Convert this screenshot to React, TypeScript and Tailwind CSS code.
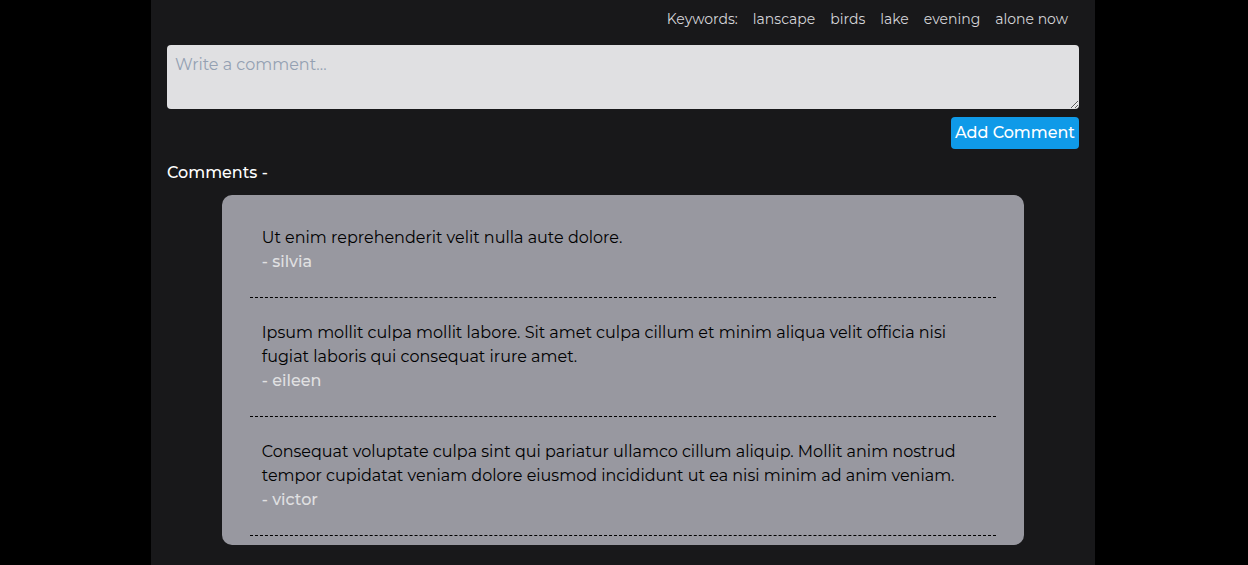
import { useState, type FormEvent } from "react";

type Comment = { text: string; author: string };

const keywords = ["lanscape", "birds", "lake", "evening", "alone now"];

const initialComments: Comment[] = [
  { text: "Ut enim reprehenderit velit nulla aute dolore.", author: "silvia" },
  {
    text: "Ipsum mollit culpa mollit labore. Sit amet culpa cillum et minim aliqua velit officia nisi fugiat laboris qui consequat irure amet.",
    author: "eileen",
  },
  {
    text: "Consequat voluptate culpa sint qui pariatur ullamco cillum aliquip. Mollit anim nostrud tempor cupidatat veniam dolore eiusmod incididunt ut ea nisi minim ad anim veniam.",
    author: "victor",
  },
];

export default function App() {
  const [comments, setComments] = useState(initialComments);
  const [draft, setDraft] = useState("");

  function addComment(event: FormEvent) {
    event.preventDefault();
    const text = draft.trim();
    if (!text) return;
    setComments([...comments, { text, author: "you" }]);
    setDraft("");
  }

  return (
    <div className="min-h-screen bg-black pr-[2px] font-['Montserrat','Inter',sans-serif] text-base">
      <main className="mx-auto min-h-screen max-w-[944px] bg-[#18181a] px-4 pt-[7px] pb-5">
        <div className="flex flex-wrap justify-end gap-x-[15px] pr-[11px] text-sm leading-6 text-[#d4d4d8]">
          <span>Keywords:</span>
          {keywords.map((keyword) => (
            <span key={keyword}>{keyword}</span>
          ))}
        </div>

        <form onSubmit={addComment} className="mt-[14px] flex flex-col items-end gap-2">
          <textarea
            aria-label="Write a comment"
            placeholder="Write a comment..."
            rows={2}
            value={draft}
            onChange={(event) => setDraft(event.target.value)}
            className="block w-full rounded bg-[#e0e0e2] p-2 text-black placeholder:text-[#94a0b2]"
          />
          <button type="submit" className="rounded bg-[#0f9ae8] p-1 font-medium text-white">
            Add Comment
          </button>
        </form>

        <h2 className="mt-3 font-medium text-white">Comments -</h2>

        <ul className="mx-auto mt-[10px] w-[88%] rounded-[10px] bg-[#9898a0] px-7 pt-2 pb-[9px]">
          {comments.map((comment, index) => (
            <li key={index} className="border-b border-dashed border-black px-3 py-[23px]">
              <p className="text-black">{comment.text}</p>
              <p className="font-medium text-[#e0e0e2]">- {comment.author}</p>
            </li>
          ))}
        </ul>
      </main>
    </div>
  );
}
